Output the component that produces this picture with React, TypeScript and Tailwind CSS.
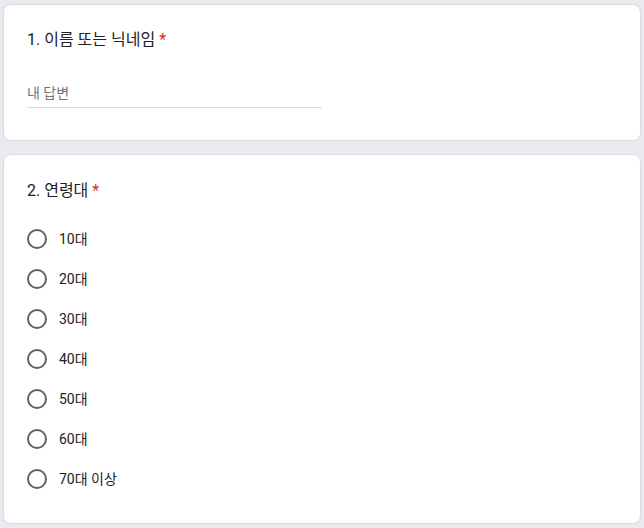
const ages = ["10대", "20대", "30대", "40대", "50대", "60대", "70대 이상"];

function Radio({ label }: { label: string }) {
  return (
    <label className="flex items-center h-10 gap-3 cursor-pointer">
      <span className="w-5 h-5 rounded-full border-2 border-[#5f6368] shrink-0" />
      <span className="text-[14px] leading-5 text-[#202124]">{label}</span>
    </label>
  );
}

export default function App() {
  return (
    <div
      className="min-h-[528px] bg-[#e8eaf0] px-[3px] pt-1 pb-1 flex flex-col gap-[13px]"
      style={{ fontFamily: 'Roboto, "Noto Sans CJK KR", sans-serif' }}
    >
      <section className="bg-white rounded-lg border border-[#dadce0] px-[23px] pt-[23px] h-[137px]">
        <h2 className="text-[16px] leading-6 text-[#202124]">
          1. 이름 또는 닉네임 <span className="text-[#d93025]">*</span>
        </h2>
        <div className="mt-[29px] w-[295px] border-b border-[#dadce0] pb-[2px]">
          <input
            placeholder="내 답변"
            className="w-full text-[14px] leading-5 text-[#202124] placeholder:text-[#70757a] outline-none bg-transparent"
          />
        </div>
      </section>

      <section className="bg-white rounded-lg border border-[#dadce0] px-[23px] pt-6 pb-6">
        <h2 className="text-[16px] leading-6 text-[#202124]">
          2. 연령대 <span className="text-[#d93025]">*</span>
        </h2>
        <div className="mt-4 flex flex-col">
          {ages.map((a) => (
            <Radio key={a} label={a} />
          ))}
        </div>
      </section>
    </div>
  );
}
